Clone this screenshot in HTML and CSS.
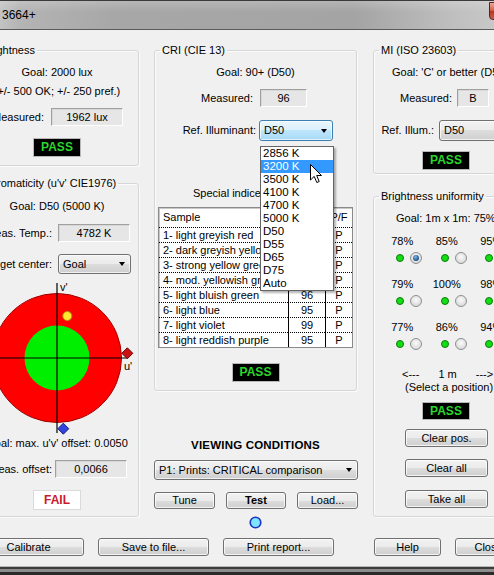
FILE: index.html
```html
<!DOCTYPE html>
<html>
<head>
<meta charset="utf-8">
<link rel="stylesheet" href="styles.css">
</head>
<body>
<div class="window">
  <div class="titlebar"><span class="title">3664+</span><span class="closebtn"></span></div>
  <div class="client">
    <div class="columns">
      <!-- LEFT -->
      <div class="col col-left">
        <fieldset class="fs fs-bright">
          <legend>Brightness</legend>
          <div class="fs-body">
            <div class="l19 center mt6">Goal: 2000 lux</div>
            <div class="l19 center">(+/- 500 OK; +/- 250 pref.)</div>
            <div class="row mt7"><span class="lbl w68">Measured:</span><span class="static sw72 ml7">1962 lux</span></div>
            <div class="status pass mt12 mx-auto">PASS</div>
          </div>
        </fieldset>
        <fieldset class="fs fs-chroma">
          <legend>Chromaticity (u'v' CIE1976)</legend>
          <div class="fs-body">
            <div class="l19 center mt7">Goal: D50 (5000 K)</div>
            <div class="row mt8"><span class="lbl w76">Meas. Temp.:</span><span class="static sw72 ml6">4782 K</span></div>
            <div class="row row20 mt12"><span class="lbl w76">Target center:</span><span class="combo cw73 ml6"><span class="ctext">Goal</span><span class="arrow"></span></span></div>
            <svg class="chart" width="162" height="158" viewBox="0 0 162 158">
              <circle cx="81" cy="80" r="64.5" fill="#ff0000" stroke="#a00000" stroke-width="1"/>
              <circle cx="81" cy="80" r="32.5" fill="#00ee00"/>
              <line x1="81" y1="5" x2="81" y2="155" stroke="#000" stroke-width="1.2"/>
              <line x1="0" y1="80" x2="151" y2="80" stroke="#000" stroke-width="1.2"/>
              <text x="84" y="13" class="axis">v'</text>
              <text x="148" y="92" class="axis">u'</text>
              <circle cx="91.3" cy="38" r="4.5" fill="#ffe830" stroke="#b88a00" stroke-width="1"/>
              <path d="M151.3 69.8 L156.8 75.3 L151.3 80.8 L145.8 75.3 Z" fill="#cc1111" stroke="#6a0000" stroke-width="1"/>
              <path d="M87.3 145.2 L92.8 150.7 L87.3 156.2 L81.8 150.7 Z" fill="#3344dd" stroke="#14207a" stroke-width="1"/>
            </svg>
            <div class="l14 center">Goal: max. u'v' offset: 0.0050</div>
            <div class="row mt10"><span class="lbl w76">Meas. offset:</span><span class="static sw72 ml3">0,0066</span></div>
            <div class="status fail mt12 mx-auto">FAIL</div>
          </div>
        </fieldset>
      </div>

      <!-- MIDDLE -->
      <div class="col col-mid">
        <fieldset class="fs fs-cri">
          <legend>CRI (CIE 13)</legend>
          <div class="fs-body">
            <div class="l19 center mt6">Goal: 90+ (D50)</div>
            <div class="row mt7"><span class="lbl w98">Measured:</span><span class="static sw47 ml7">96</span></div>
            <div class="row row21 mt13"><span class="lbl w101">Ref. Illuminant:</span><span class="combo focus cw74 ml3"><span class="ctext">D50</span><span class="arrow"></span></span></div>
            <div class="special mt46">Special indices (R1 - R8)</div>
            <div class="tablewrap mt7">
              <table class="cri-table">
                <colgroup><col class="c1"><col class="c2"><col class="c3"></colgroup>
                <tr class="head"><td>Sample</td><td class="ctr">Ri</td><td class="ctr">P/F</td></tr>
                <tr><td>1- light greyish red</td><td class="ctr">97</td><td class="ctr">P</td></tr>
                <tr><td>2- dark greyish yellow</td><td class="ctr">95</td><td class="ctr">P</td></tr>
                <tr><td>3- strong yellow green</td><td class="ctr">94</td><td class="ctr">P</td></tr>
                <tr><td>4- mod. yellowish green</td><td class="ctr">96</td><td class="ctr">P</td></tr>
                <tr><td>5- light bluish green</td><td class="ctr">96</td><td class="ctr">P</td></tr>
                <tr><td>6- light blue</td><td class="ctr">95</td><td class="ctr">P</td></tr>
                <tr><td>7- light violet</td><td class="ctr">99</td><td class="ctr">P</td></tr>
                <tr class="last"><td>8- light reddish purple</td><td class="ctr">95</td><td class="ctr">P</td></tr>
              </table>
            </div>
            <div class="status pass mt15 mx-auto">PASS</div>

            <ul class="droplist">
              <li>2856 K</li>
              <li class="sel">3200 K</li>
              <li>3500 K</li>
              <li>4100 K</li>
              <li>4700 K</li>
              <li>5000 K</li>
              <li>D50</li>
              <li>D55</li>
              <li>D65</li>
              <li>D75</li>
              <li>Auto</li>
            </ul>
            <svg class="cursor" width="13" height="20" viewBox="0 0 13 20">
              <path d="M0.5 0.5 L0.5 16 L4.2 12.4 L6.8 18.5 L9.2 17.5 L6.7 11.5 L11.5 11.5 Z" fill="#fff" stroke="#000" stroke-width="1" stroke-linejoin="round"/>
            </svg>
          </div>
        </fieldset>
        <div class="vc-title">VIEWING CONDITIONS</div>
        <div class="combo vc-combo mt8"><span class="ctext">P1: Prints: CRITICAL comparison</span><span class="arrow"></span></div>
        <div class="vc-buttons">
          <span class="btn b-tune">Tune</span>
          <span class="btn b-test">Test</span>
          <span class="btn b-load">Load...</span>
        </div>
        <svg class="led" width="13" height="13" viewBox="0 0 13 13"><circle cx="6.5" cy="6.5" r="5.3" fill="#7fe4ff" stroke="#1a36c4" stroke-width="1.6"/></svg>
      </div>

      <!-- RIGHT -->
      <div class="col col-right">
        <fieldset class="fs fs-mi">
          <legend>MI (ISO 23603)</legend>
          <div class="fs-body">
            <div class="l19 mt6 pl18 nowrap">Goal: 'C' or better (D50)</div>
            <div class="row mt7"><span class="lbl w78">Measured:</span><span class="static sw32 ml5">B</span></div>
            <div class="row row21 mt13"><span class="lbl w60">Ref. Illum.:</span><span class="combo cw74 ml5"><span class="ctext">D50</span><span class="arrow"></span></span></div>
            <div class="status pass mt10 ml48">PASS</div>
          </div>
        </fieldset>
        <fieldset class="fs fs-unif">
          <legend>Brightness uniformity</legend>
          <div class="fs-body">
            <div class="l13 mt9 pl22 nowrap">Goal: 1m x 1m: 75% - 100%</div>
            <div class="grid">
              <div class="cell"><div class="pct">78%</div><div class="dots"><span class="gdot"></span><span class="radio on"></span></div></div>
              <div class="cell"><div class="pct">85%</div><div class="dots"><span class="gdot"></span><span class="radio"></span></div></div>
              <div class="cell"><div class="pct">95%</div><div class="dots"><span class="gdot"></span><span class="radio"></span></div></div>
              <div class="cell"><div class="pct">79%</div><div class="dots"><span class="gdot"></span><span class="radio"></span></div></div>
              <div class="cell"><div class="pct">100%</div><div class="dots"><span class="gdot"></span><span class="radio"></span></div></div>
              <div class="cell"><div class="pct">98%</div><div class="dots"><span class="gdot"></span><span class="radio"></span></div></div>
              <div class="cell"><div class="pct">77%</div><div class="dots"><span class="gdot"></span><span class="radio"></span></div></div>
              <div class="cell"><div class="pct">86%</div><div class="dots"><span class="gdot"></span><span class="radio"></span></div></div>
              <div class="cell"><div class="pct">94%</div><div class="dots"><span class="gdot"></span><span class="radio"></span></div></div>
            </div>
            <div class="scale"><span>&lt;---</span><span>1 m</span><span>---&gt;</span></div>
            <div class="l13 pl31 nowrap">(Select a position)</div>
            <div class="status pass mt8 ml48 h18">PASS</div>
            <span class="btn ubtn mt9">Clear pos.</span>
            <span class="btn ubtn mt12">Clear all</span>
            <span class="btn ubtn mt13">Take all</span>
          </div>
        </fieldset>
      </div>
    </div>
    <div class="bottom-buttons">
      <span class="btn bb-wide bb-cal">Calibrate</span>
      <span class="btn bb-wide">Save to file...</span>
      <span class="btn bb-wide">Print report...</span>
      <span class="btn bb-small bb-help">Help</span>
      <span class="btn bb-small">Close</span>
    </div>
  </div>
  <div class="frame-bottom"></div>
</div>
</body>
</html>
```
FILE: styles.css
```css
* { box-sizing: border-box; }
html, body { margin: 0; padding: 0; }
body {
  width: 494px; height: 575px; overflow: hidden;
  background: #f0f0f0;
  font: 11px/13px "Liberation Sans", Arial, sans-serif;
  color: #000;
}
.window { width: 565px; margin-left: -25px; }

.titlebar {
  height: 30px;
  border-top: 1px solid #3a3a3a;
  border-bottom: 1px solid #5a5a5a;
  background:
    linear-gradient(rgba(255,255,255,0.18), rgba(255,255,255,0) 40%),
    linear-gradient(to right, #d6d6d6 0, #b4b4b4 45px, #a7a7a7 140px, #a4a4a4 380px, #bdbdbd 470px, #cccccc 540px);
  display: flex; align-items: flex-start;
  padding-left: 27px;
  font-size: 12px;
}
.title { line-height: 28px; }
.closebtn {
  margin-left: auto; margin-right: 8px; margin-top: 1px;
  width: 43px; height: 18px;
  border: 1px solid #5a1f1f; border-radius: 0 0 4px 4px;
  background: linear-gradient(#e9a799, #cf5a48 50%, #b8321f 51%, #c8604a);
}

.client { height: 536px; background: #f0f0f0; }
.columns { display: flex; align-items: flex-start; height: 500px; padding-top: 14px; }
.col { display: flex; flex-direction: column; }
.col-left { width: 164px; }
.col-mid { width: 203px; margin-left: 15px; }
.col-right { width: 158px; margin-left: 16px; }

.fs {
  margin: 0; padding: 0; min-width: 0;
  border: 1px solid #d3d7da; border-radius: 3px;
  box-shadow: inset 1px 1px 0 #fbfbfb, 1px 1px 0 #fbfbfb;
}
.fs legend { padding: 0 2px; margin-left: 5px; line-height: 13px; }
.fs-body { position: relative; }
.fs-bright .fs-body { padding-bottom: 8px; }
.fs-chroma { margin-top: 11px; }
.fs-chroma .fs-body { padding-bottom: 6px; }
.fs-cri .fs-body { padding-bottom: 8px; }
.fs-mi .fs-body { padding-bottom: 3px; }
.fs-unif { margin-top: 16px; }
.fs-unif .fs-body { padding-bottom: 8px; display: flex; flex-direction: column; align-items: flex-start; }

.l19 { line-height: 19px; }
.l14 { line-height: 14px; }
.l13 { line-height: 13px; }
.center { text-align: center; white-space: nowrap; }
.nowrap { white-space: nowrap; }
.mt6 { margin-top: 6px; } .mt7 { margin-top: 7px; } .mt8 { margin-top: 8px; } .mt9 { margin-top: 9px; }
.mt10 { margin-top: 10px; } .mt12 { margin-top: 12px; } .mt13 { margin-top: 13px; } .mt15 { margin-top: 15px; }
.mt46 { margin-top: 46px; }
.ml3 { margin-left: 3px; } .ml5 { margin-left: 5px; } .ml6 { margin-left: 6px; } .ml7 { margin-left: 7px; }
.ml48 { margin-left: 48px; }
.pl18 { padding-left: 18px; } .pl22 { padding-left: 22px; } .pl31 { padding-left: 31px; }
.mx-auto { margin-left: auto; margin-right: auto; }

.row { display: flex; align-items: center; height: 18px; white-space: nowrap; }
.row20 { height: 20px; }
.row21 { height: 21px; }
.lbl { text-align: right; flex: none; display: flex; justify-content: flex-end; }
.w60 { width: 60px; } .w68 { width: 68px; } .w76 { width: 76px; } .w78 { width: 78px; }
.w98 { width: 98px; } .w101 { width: 101px; }

.static {
  height: 18px; flex: none;
  display: flex; align-items: center; justify-content: center;
  background: #e6e6e6;
  border-top: 1px solid #a0a0a0; border-left: 1px solid #a0a0a0;
  border-right: 1px solid #fff; border-bottom: 1px solid #fff;
  box-shadow: inset 1px 1px 0 #d8d8d8;
}
.sw72 { width: 72px; } .sw47 { width: 47px; } .sw32 { width: 32px; }

.combo {
  height: 100%; flex: none;
  display: flex; align-items: center;
  border: 1px solid #707070; border-radius: 3px;
  background: linear-gradient(#f2f2f2 0%, #ebebeb 50%, #dddddd 50%, #cfcfcf 100%);
  box-shadow: inset 0 0 0 1px rgba(255,255,255,0.7);
  padding-left: 4px;
  white-space: nowrap;
}
.combo.focus {
  border-color: #3c7fb1;
  background: linear-gradient(#eaf6fd 0%, #d9f0fc 50%, #bee6fd 50%, #a7d9f5 100%);
}
.cw73 { width: 73px; } .cw74 { width: 74px; }
.arrow {
  margin-left: auto; margin-right: 5px;
  width: 0; height: 0;
  border-left: 3.5px solid transparent; border-right: 3.5px solid transparent;
  border-top: 4px solid #000;
}

.status {
  width: 48px; height: 19px;
  display: flex; align-items: center; justify-content: center;
  font-weight: bold; font-size: 12px;
}
.status.h18 { height: 18px; }
.pass { background: #000; color: #2bd62b; border: 1px solid #b8b8b8; }
.fail { background: #fff; color: #cc1a2a; border: 1px solid #dadada; height: 20px; }

.chart { display: block; margin-top: 4px; }
.axis { font: 11px "Liberation Sans", Arial, sans-serif; fill: #000; }

.special { padding-left: 38px; white-space: nowrap; line-height: 13px; }
.tablewrap {
  margin-left: 3px; width: 195px;
  border: 1px solid #8a8a8a;
  box-shadow: inset 1px 1px 0 #c8c8c8;
  background: #fff;
}
.cri-table { border-collapse: separate; border-spacing: 0; width: 193px; table-layout: fixed; }
.cri-table .c1 { width: 129px; }
.cri-table .c2 { width: 37px; }
.cri-table .c3 { width: 27px; }
.cri-table td {
  padding: 0 0 0 4px; height: 15px; line-height: 14px;
  border-bottom: 1px dotted #000;
  white-space: nowrap; overflow: hidden;
}
.cri-table td + td { border-left: 1px solid #000; }
.cri-table td.ctr { text-align: center; padding: 0; }
.cri-table tr.head td { height: 20px; line-height: 19px; }
.cri-table tr.last td { border-bottom: none; height: 14px; }

.droplist {
  position: absolute; left: 105px; top: 83px;
  width: 74px; height: 145px;
  margin: 0; padding: 0; list-style: none;
  background: #fff; border: 1px solid #646464;
  box-shadow: 2px 2px 2px rgba(0,0,0,0.3);
}
.droplist li { height: 13px; line-height: 13px; padding-left: 2px; font-size: 11.5px; }
.droplist li.sel { background: #3399ff; color: #fff; }
.cursor { position: absolute; left: 155px; top: 101px; }

.vc-title { margin-top: 48px; text-align: center; font-weight: bold; font-size: 11.5px; line-height: 13px; letter-spacing: 0.2px; }
.vc-combo { height: 20px; width: 204px; }
.vc-buttons { display: flex; margin-top: 12px; gap: 11px; }
.led { display: block; margin: 7px auto 0; }

.btn {
  height: 18px;
  display: flex; align-items: center; justify-content: center;
  border: 1px solid #707070; border-radius: 3px;
  background: linear-gradient(#f2f2f2 0%, #ebebeb 50%, #dddddd 50%, #cfcfcf 100%);
  box-shadow: inset 0 0 0 1px rgba(255,255,255,0.75);
  white-space: nowrap; flex: none;
}
.b-tune { width: 61px; height: 17px; }
.b-test { width: 60px; height: 17px; font-weight: bold; }
.b-load { width: 61px; height: 17px; }
.ubtn { width: 83px; margin-left: 31px; }

.grid {
  display: grid; grid-template-columns: repeat(3, 44.5px); row-gap: 14px;
  margin-top: 10px; margin-left: 6px;
}
.cell { height: 29px; }
.pct { text-align: center; line-height: 13px; }
.dots { display: flex; align-items: center; height: 12px; margin-top: 4px; padding-left: 16px; }
.gdot { width: 8px; height: 8px; border-radius: 50%; background: #13dd13; border: 1px solid #0b7a0b; }
.radio {
  width: 12px; height: 12px; border-radius: 50%; margin-left: 6px;
  border: 1px solid #8e8f8f;
  background: radial-gradient(circle at 50% 40%, #fbfbfb, #dcdcdc 70%);
  display: flex; align-items: center; justify-content: center;
}
.radio.on::after {
  content: ""; width: 6px; height: 6px; border-radius: 50%;
  background: radial-gradient(circle at 40% 35%, #7db8e8, #1b4f86 70%);
}
.scale { display: flex; gap: 19px; margin-top: 18px; padding-left: 28px; line-height: 13px; white-space: nowrap; }

.bottom-buttons { display: flex; margin-top: 8px; }
.bb-wide { width: 111px; margin-right: 14px; }
.bb-cal { margin-left: -2px; }
.bb-small { width: 67px; margin-right: 14px; }
.bb-help { margin-left: 26px; }

.frame-bottom {
  height: 9px;
  background: linear-gradient(#b8b8b8 0, #b8b8b8 1px, #3c3c3c 1px, #3c3c3c 3px, #8c8c8c 3px, #8c8c8c 6px, #2a2a2a 6px);
}
```
